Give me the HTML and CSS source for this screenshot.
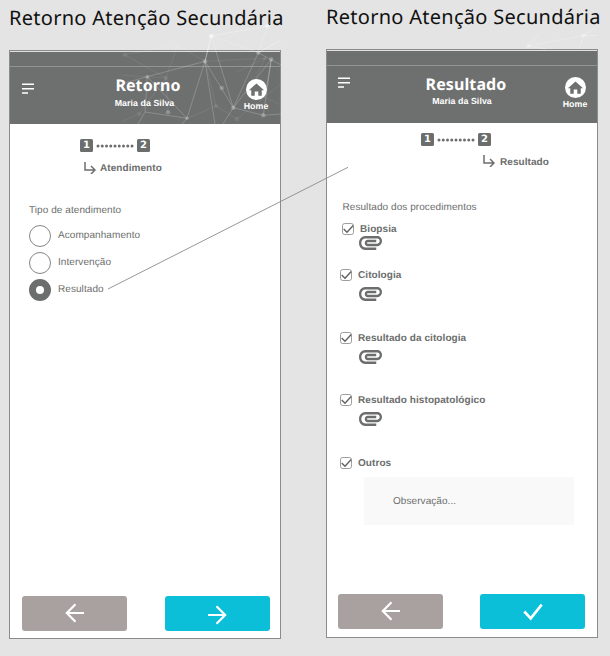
FILE: index.html
```html
<!DOCTYPE html>
<html lang="pt-BR">
<head>
<meta charset="utf-8">
<title>Retorno Atenção Secundária</title>
<link rel="stylesheet" href="styles.css">
</head>
<body>
<svg class="defs" aria-hidden="true">
  <symbol id="menu" viewBox="0 0 12 11"><path d="M0 1.2H12M0 5.7H12M0 10H6" fill="none" stroke="currentColor" stroke-width="1.5"/></symbol>
  <symbol id="home" viewBox="0 0 20 20"><circle cx="10" cy="10" r="10" fill="#fff"/><path d="M10 4.2 2.8 10.7H5V16H8.3V11.8H11.7V16H15V10.7H17.2Z" fill="#6e706f"/></symbol>
  <symbol id="sub" viewBox="0 0 12 12"><path d="M1 0V8H10.5M7 4 11 8 7 12" fill="none" stroke="currentColor" stroke-width="1.5"/></symbol>
  <symbol id="clip" viewBox="2 7 20 11" preserveAspectRatio="none"><path fill="currentColor" d="M2 12.5C2 9.46 4.46 7 7.5 7H18c2.21 0 4 1.79 4 4s-1.79 4-4 4H9.5C8.12 15 7 13.88 7 12.5S8.12 10 9.5 10H17v2H9.41c-.55 0-.55 1 0 1H18c1.1 0 2-.9 2-2s-.9-2-2-2H7.5C5.57 9 4 10.57 4 12.5S5.57 16 7.5 16H17v2H7.5C4.46 18 2 15.54 2 12.5z"/></symbol>
  <symbol id="check" viewBox="0 0 12 12"><rect x=".5" y=".5" width="11" height="11" rx="2.2" fill="none" stroke="#858585" stroke-width=".8"/><path d="M1.7 6 5 9.2 11.2 2.6" fill="none" stroke="#606261" stroke-width="1.4"/></symbol>
  <symbol id="dots" viewBox="0 0 38 4"><path d="M2 2H37" fill="none" stroke="currentColor" stroke-width="3" stroke-linecap="round" stroke-dasharray="0 4.25"/></symbol>
  <symbol id="back" viewBox="0 0 20 20"><path d="M19 10H2M10.5 1.2 1.8 10 10.5 18.8" fill="none" stroke="#fff" stroke-width="2.2"/></symbol>
  <symbol id="next" viewBox="0 0 20 20"><path d="M1 10H18M9.5 1.2 18.2 10 9.5 18.8" fill="none" stroke="#fff" stroke-width="2.2"/></symbol>
  <symbol id="done" viewBox="0 0 20 20"><path d="M1.3 9.5 7.7 16.4 18.7 2.6" fill="none" stroke="#fff" stroke-width="2.6"/></symbol>
</svg>

<main class="board">
  <section class="column first">
    <h1 class="caption">Retorno Atenção Secundária</h1>
    <div class="phone">
      <header class="header">
        <div class="status"></div>
        <div class="bar">
          <svg class="menu"><use href="#menu"/></svg>
          <div class="heading"><h2>Retorno</h2><p>Maria da Silva</p></div>
          <div class="home"><svg><use href="#home"/></svg><span>Home</span></div>
        </div>
      </header>
      <div class="steps"><b>1</b><svg><use href="#dots"/></svg><b>2</b></div>
      <div class="current"><svg><use href="#sub"/></svg><strong>Atendimento</strong></div>
      <div class="form">
        <p class="label">Tipo de atendimento</p>
        <div class="option"><i class="radio"></i><span>Acompanhamento</span></div>
        <div class="option"><i class="radio"></i><span>Intervenção</span></div>
        <div class="option"><i class="radio on"></i><span>Resultado</span></div>
      </div>
      <footer class="actions">
        <div class="button grey"><svg><use href="#back"/></svg></div>
        <div class="button cyan"><svg class="low"><use href="#next"/></svg></div>
      </footer>
    </div>
  </section>

  <section class="column second">
    <h1 class="caption">Retorno Atenção Secundária</h1>
    <div class="phone">
      <header class="header">
        <div class="status"></div>
        <div class="bar">
          <svg class="menu"><use href="#menu"/></svg>
          <div class="heading"><h2>Resultado</h2><p>Maria da Silva</p></div>
          <div class="home"><svg><use href="#home"/></svg><span>Home</span></div>
        </div>
      </header>
      <div class="steps"><b>1</b><svg><use href="#dots"/></svg><b>2</b></div>
      <div class="current"><svg><use href="#sub"/></svg><strong>Resultado</strong></div>
      <div class="form">
        <p class="label">Resultado dos procedimentos</p>
        <div class="item biopsy"><div class="row"><svg class="check"><use href="#check"/></svg><strong>Biopsia</strong></div><svg class="clip"><use href="#clip"/></svg></div>
        <div class="item cytology"><div class="row"><svg class="check"><use href="#check"/></svg><strong>Citologia</strong></div><svg class="clip"><use href="#clip"/></svg></div>
        <div class="item"><div class="row"><svg class="check"><use href="#check"/></svg><strong>Resultado da citologia</strong></div><svg class="clip"><use href="#clip"/></svg></div>
        <div class="item histology"><div class="row"><svg class="check"><use href="#check"/></svg><strong>Resultado histopatológico</strong></div><svg class="clip"><use href="#clip"/></svg></div>
        <div class="item other"><div class="row"><svg class="check"><use href="#check"/></svg><strong>Outros</strong></div></div>
        <div class="notes">Observação...</div>
      </div>
      <footer class="actions">
        <div class="button grey"><svg><use href="#back"/></svg></div>
        <div class="button cyan"><svg><use href="#done"/></svg></div>
      </footer>
    </div>
  </section>
</main>

<svg class="overlay" viewBox="0 0 610 656" aria-hidden="true">
  <defs><clipPath id="area"><rect x="121" y="20" width="160" height="104"/></clipPath></defs>
  <g clip-path="url(#area)" stroke="#fff" fill="none">
    <path stroke-opacity=".2" d="M147.3 76.7 205 61.3 187 118.3M205 61.3 233.3 107.7M205 61.3 215 124M205 61.3 211.3 36 233.3 107.7 258.3 52.7 267.3 26M211.3 36 258.3 52.7 281 65M233.3 107.7 271.3 59.3 263.3 115.3 233.3 107.7 223 124M271.3 59.3 266 90M187 118.3 145 112 147.3 76.7M263.3 115.3 281 114M145 112 138 124M187 118.3 182 124M187 118.3 147.3 76.7 121 84"/>
    <path stroke-opacity=".3" d="M211.3 36 267.3 26 281 10M211.3 36 205 61.3M258.3 52.7 281 40"/>
    <path stroke-opacity=".07" d="M124.7 54.7 166 78 121 75M124.7 54.7 177.7 45 166 78M187 118.3 216 106 237 119 281 84M177.7 45 205 61.3 265 58.3 237 72M166 78 139.3 113.7 121 122M168 112.3 166 78M216 106 205 61M265 58.3 250 90 281 105"/>
    <g stroke="none" fill="#fff" fill-opacity=".24">
      <circle cx="205" cy="61.3" r="2.2"/><circle cx="147.3" cy="76.7" r="2"/><circle cx="221.7" cy="88" r="2.2"/><circle cx="233.3" cy="107.7" r="2.2"/><circle cx="258.3" cy="52.7" r="2.2"/><circle cx="271.3" cy="59.3" r="2.2"/><circle cx="263.3" cy="115.3" r="2.2"/><circle cx="168" cy="112.3" r="2.2"/><circle cx="187" cy="118.3" r="1.8"/>
    </g>
    <g stroke="none" fill="#fff" fill-opacity=".5"><circle cx="211.3" cy="36" r="2.2"/><circle cx="267.3" cy="26" r="2"/></g>
    <g stroke="none" fill="#fff" fill-opacity=".08"><circle cx="124.7" cy="54.7" r="2.2"/><circle cx="166" cy="78" r="2.2"/><circle cx="216" cy="106" r="2.2"/><circle cx="237" cy="119" r="2.2"/><circle cx="139.3" cy="113.7" r="2.2"/><circle cx="177.7" cy="45" r="2"/><circle cx="265" cy="58.3" r="2"/></g>
  </g>
  <g stroke="#fff" stroke-opacity=".22" fill="none"><path d="M528 46 583.5 35.5 598 26M583.5 35.5 598 35.5M583.5 35.5 579 49M528 46 539 34M528 46 545 49"/></g>
  <g fill="#fff" fill-opacity=".25"><circle cx="528" cy="46" r="2.2"/><circle cx="583.5" cy="35.5" r="2"/></g>
  <path d="M108 289 348 167.3" stroke="#8b8b8b" stroke-width=".9"/>
</svg>
</body>
</html>
```
FILE: styles.css
```css
* { box-sizing: border-box; margin: 0; padding: 0; }
body { width: 610px; height: 656px; overflow: hidden; background: #e4e4e4; color: #6c6e6d; font: 10px/14px "Liberation Sans", Arial, sans-serif; letter-spacing: .07px; text-rendering: geometricPrecision; position: relative; }
.defs { display: none; }
svg { display: block; flex: none; }
.board { display: flex; gap: 45px; padding-left: 9px; }
.column { width: 272px; flex: none; }
.caption { height: 50px; padding-top: 4px; font: 400 20px/28px "Noto Sans", sans-serif; letter-spacing: .28px; white-space: nowrap; color: #111; }
.second .caption { height: 49px; padding-top: 3px; }
.phone { height: 589px; background: #fff; border: 1px solid #8b8b8b; display: flex; flex-direction: column; }
.header { height: 73px; flex: none; background: #6e706f; border-top: 1px solid #e0e0e0; color: #fff; }
.status { height: 15px; border-bottom: 1px solid #929493; }
.bar { display: flex; position: relative; z-index: 2; }
.menu { width: 12px; height: 11px; margin: 16px 0 0 12px; }
.heading { width: 160px; margin: 6px 0 0 34px; text-align: center; }
.heading h2 { font: 700 16px/24px "Noto Sans", sans-serif; letter-spacing: .1px; }
.heading p { font: 700 8.8px/10px "Liberation Sans", sans-serif; margin-left: -7px; margin-top: 1px; }
.home { width: 30px; margin: 12px 0 0 13px; display: flex; flex-direction: column; align-items: center; font: 700 8.8px/10px "Liberation Sans", sans-serif; }
.home svg { width: 21px; height: 21px; margin-bottom: 1px; }
.steps { display: flex; align-items: center; height: 13px; margin: 15px 0 0 70px; flex: none; }
.steps b { width: 13px; height: 13px; border-radius: 1.5px; background: #6c6e6d; color: #fff; font: 700 10px/14px "DejaVu Sans", sans-serif; text-align: center; }
.steps svg { width: 38px; height: 4px; margin: 0 3px; }
.current { display: flex; height: 14px; margin: 9px 0 0 74px; gap: 4px; flex: none; }
.current svg { width: 12px; height: 12px; margin-top: 1px; }
.current strong { margin-top: 1px; }
.form { flex: 1; padding: 29px 0 0 19px; }
.label { height: 14px; }
.option { display: flex; align-items: center; gap: 7px; height: 27px; }
.label + .option { margin-top: 4px; }
.option span { margin-top: 1px; }
.radio { width: 22px; height: 22px; border: 1px solid #858786; border-radius: 50%; }
.radio.on { border: 7px solid #6c6e6d; }
.actions { display: flex; justify-content: space-between; height: 35px; margin: 0 10.5px 7px 12px; flex: none; }
.button { width: 105px; border-radius: 3px; display: flex; align-items: center; justify-content: center; }
.button svg { width: 20px; height: 20px; }
.grey svg { margin-bottom: 1px; }
.button .low { margin-top: 2px; }
.grey { background: #a9a19f; }
.cyan { background: #0cbfd9; }

.second .menu { margin: 11px 0 0 11px; }
.second .heading { margin-left: 36px; }
.second .heading p { margin-left: -8px; margin-top: 0; }
.second .home { margin-left: 14px; margin-top: 11px; }
.second .steps { margin: 10px 0 0 94px; }
.second .current { margin: 9px 0 0 156px; gap: 5px; }
.second .current svg { margin-top: 0; }
.second .form { padding: 32px 0 0 13px; }
.second .label { padding-left: 2.5px; margin-bottom: 7px; }
.item { height: 62px; }
.row { display: flex; align-items: center; gap: 6px; height: 14px; }
.row strong { margin-top: 1px; }
.check { width: 12px; height: 12px; }
.clip { width: 23px; height: 14px; margin: 5px 0 0 18.5px; }
.biopsy { height: 46px; }
.biopsy .row { margin-left: 2px; }
.biopsy .clip { margin-top: 0; }
.cytology { height: 63px; }
.histology { height: 63px; }
.other { height: 21px; }
.notes { width: 210px; height: 48px; margin-left: 24px; padding: 18px 0 0 29px; background: #f9f9f9; }
.second .actions { margin-bottom: 8px; margin-left: 11px; margin-right: 12px; }
.overlay { position: absolute; left: 0; top: 0; width: 610px; height: 656px; pointer-events: none; z-index: 1; }
```
